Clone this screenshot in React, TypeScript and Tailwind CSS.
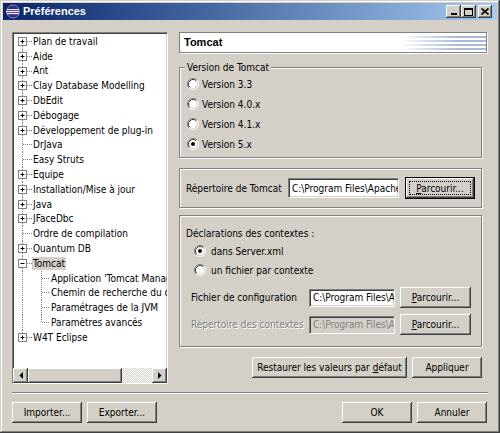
const UI = "font-['DejaVu_Sans_Condensed','Liberation_Sans',sans-serif] text-[10px] text-black";
const BOLD = "font-['Liberation_Sans',Arial,sans-serif] font-bold text-[11px]";

const raised =
  'bg-[#d4d0c8] shadow-[inset_-1px_-1px_0_#404040,inset_1px_1px_0_#fff,inset_-2px_-2px_0_#808080,inset_2px_2px_0_#d4d0c8]';
const raisedDefault =
  'bg-[#d4d0c8] shadow-[inset_0_0_0_1px_#000,inset_-2px_-2px_0_#404040,inset_2px_2px_0_#fff,inset_-3px_-3px_0_#808080,inset_3px_3px_0_#d4d0c8]';
const sunken =
  'border border-t-[#808080] border-l-[#808080] border-b-white border-r-white shadow-[inset_1px_1px_0_#404040,inset_-1px_-1px_0_#d4d0c8]';
const etched = 'border border-[#808080] shadow-[inset_1px_1px_0_#fff,1px_1px_0_#fff]';

type Node = { label: string; exp?: '+' | '-'; level?: number; last?: boolean; selected?: boolean };

const tree: Node[] = [
  { label: 'Plan de travail', exp: '+' },
  { label: 'Aide', exp: '+' },
  { label: 'Ant', exp: '+' },
  { label: 'Clay Database Modelling', exp: '+' },
  { label: 'DbEdit', exp: '+' },
  { label: 'Débogage', exp: '+' },
  { label: 'Développement de plug-in', exp: '+' },
  { label: 'DrJava' },
  { label: 'Easy Struts' },
  { label: 'Equipe', exp: '+' },
  { label: 'Installation/Mise à jour', exp: '+' },
  { label: 'Java', exp: '+' },
  { label: 'JFaceDbc', exp: '+' },
  { label: 'Ordre de compilation' },
  { label: 'Quantum DB', exp: '+' },
  { label: 'Tomcat', exp: '-', selected: true },
  { label: "Application 'Tomcat Manager'", level: 1 },
  { label: 'Chemin de recherche du contexte', level: 1 },
  { label: 'Paramétrages de la JVM', level: 1 },
  { label: 'Paramètres avancés', level: 1, last: true },
  { label: 'W4T Eclipse', exp: '+', last: true },
];

function TreeLines({ node, first }: { node: Node; first: boolean }) {
  const lvl = node.level ?? 0;
  const w = lvl === 1 ? 36 : 18;
  const dot = { stroke: '#808080', strokeWidth: 1, strokeDasharray: '1 1' };
  return (
    <svg width={w} height={15} viewBox={`0 0 ${w} 15`} className="shrink-0">
      {lvl === 0 && (
        <line x1={8.5} x2={8.5} y1={first ? 7.5 : 0} y2={node.last ? 7.5 : 15} {...dot} />
      )}
      {lvl === 0 && <line x1={node.exp ? 13 : 9} x2={18} y1={7.5} y2={7.5} {...dot} />}
      {lvl === 1 && (
        <>
          <line x1={8.5} x2={8.5} y1={0} y2={15} {...dot} />
          <line x1={27.5} x2={27.5} y1={0} y2={node.last ? 7.5 : 15} {...dot} />
          <line x1={28} x2={36} y1={7.5} y2={7.5} {...dot} />
        </>
      )}
      {node.exp && (
        <>
          <rect x={4.5} y={3.5} width={8} height={8} fill="#fff" stroke="#808080" />
          <line x1={6.5} x2={10.5} y1={7.5} y2={7.5} stroke="#000" />
          {node.exp === '+' && <line x1={8.5} x2={8.5} y1={5.5} y2={9.5} stroke="#000" />}
        </>
      )}
    </svg>
  );
}

function Radio({ checked }: { checked?: boolean }) {
  return (
    <svg width={12} height={12} viewBox="0 0 12 12" className="shrink-0">
      <circle cx={6} cy={6} r={5} fill="#fff" />
      <path d="M2.11 9.89A5.5 5.5 0 0 1 9.89 2.11" fill="none" stroke="#808080" />
      <path d="M9.89 2.11A5.5 5.5 0 0 1 2.11 9.89" fill="none" stroke="#fff" />
      <path d="M2.82 9.18A4.5 4.5 0 0 1 9.18 2.82" fill="none" stroke="#404040" />
      <path d="M9.18 2.82A4.5 4.5 0 0 1 2.82 9.18" fill="none" stroke="#d4d0c8" />
      {checked && <circle cx={6} cy={6} r={2} fill="#000" />}
    </svg>
  );
}

function Btn({ children, className = '', def }: { children: React.ReactNode; className?: string; def?: boolean }) {
  if (def) {
    return (
      <div className={`${raisedDefault} flex items-stretch ${className}`}>
        <div className="m-[4px] flex flex-1 items-center justify-center border border-dotted border-black">{children}</div>
      </div>
    );
  }
  return <div className={`${raised} flex items-center justify-center ${className}`}>{children}</div>;
}

function Parcourir() {
  return <span className="inline-block first-letter:underline">Parcourir...</span>;
}

function Field({ disabled, className = '' }: { disabled?: boolean; className?: string }) {
  return (
    <div
      className={`${sunken} ${disabled ? 'bg-[#d4d0c8] text-[#808080]' : 'bg-white'} flex items-center overflow-hidden whitespace-nowrap pl-[3px] ${className}`}
    >
      {'C:\\Program Files\\Apache Group\\Tomcat 5.0'}
    </div>
  );
}

function Arrow({ dir }: { dir: 'l' | 'r' }) {
  return (
    <div className={`${raised} flex h-full w-[15px] shrink-0 items-center justify-center`}>
      <svg width={4} height={7} viewBox="0 0 4 7">
        <path d={dir === 'l' ? 'M4 0V7L0.5 3.5Z' : 'M0 0V7L3.5 3.5Z'} fill="#000" />
      </svg>
    </div>
  );
}

export default function App() {
  return (
    <div
      className={`${UI} flex h-[433px] w-[500px] flex-col bg-[#d4d0c8] p-[3px] shadow-[inset_-1px_-1px_0_#404040,inset_1px_1px_0_#d4d0c8,inset_-2px_-2px_0_#808080,inset_2px_2px_0_#fff]`}
    >
      {/* Title bar */}
      <div className="flex h-[17px] shrink-0 items-center bg-linear-to-r from-[#0a246a] to-[#a6caf0] pl-[2px] pr-[5px]">
        <svg width={15} height={15} viewBox="0 0 15 15" className="shrink-0">
          <circle cx={8} cy={7.5} r={6.5} fill="#3b2a7a" />
          <circle cx={8} cy={7.5} r={6.5} fill="none" stroke="#9c8fd0" strokeWidth={0.8} />
          <rect x={2} y={5} width={12} height={1.2} fill="#e8e4ff" />
          <rect x={1} y={7} width={13} height={1.2} fill="#e8e4ff" />
          <rect x={2} y={9} width={12} height={1.2} fill="#e8e4ff" />
        </svg>
        <span className={`${BOLD} ml-[3px] text-white`}>Préférences</span>
        <div className="flex-1" />
        <div className={`${raised} flex h-[13px] w-[15px] items-end justify-center pb-[3px]`}>
          <div className="h-[2px] w-[6px] bg-black" />
        </div>
        <div className={`${raised} flex h-[13px] w-[15px] items-center justify-center`}>
          <div className="h-[8px] w-[9px] border border-t-2 border-black" />
        </div>
        <div className={`${raised} ml-[2px] flex h-[13px] w-[14px] items-center justify-center`}>
          <svg width={8} height={7} viewBox="0 0 8 7">
            <path d="M0.5 0.5L7.5 6.5M7.5 0.5L0.5 6.5" stroke="#000" strokeWidth={1.6} />
          </svg>
        </div>
      </div>

      {/* Body */}
      <div className="flex flex-1 flex-col px-[9px] pt-[12px]">
        <div className="flex h-[352px] gap-[11px]">
          {/* Tree */}
          <div className={`${sunken} flex w-[156px] flex-col bg-white`}>
            <div className="flex-1 overflow-hidden pl-[1px] pt-[1px]">
              {tree.map((n, i) => (
                <div key={i} className="flex h-[14.8px] items-center whitespace-nowrap">
                  <TreeLines node={n} first={i === 0} />
                  <span className={`px-[1px] leading-[13px] ${n.selected ? 'bg-[#d4d0c8]' : ''}`}>{n.label}</span>
                </div>
              ))}
            </div>
            <div className="flex h-[15px] shrink-0">
              <Arrow dir="l" />
              <div className={`${raised} h-full w-[94px] shrink-0`} />
              <div className="h-full flex-1 bg-[image:repeating-conic-gradient(#d4d0c8_0_25%,#fff_0_50%)] bg-size-[2px_2px]" />
              <Arrow dir="r" />
            </div>
          </div>

          {/* Right panel */}
          <div className="flex w-[308px] flex-col">
            <div className="flex h-[21px] shrink-0 items-center justify-between border border-[#808080] bg-white shadow-[1px_1px_0_#fff]">
              <span className={`${BOLD} pl-[4px]`}>Tomcat</span>
              {/* faded stripes */}
              <div className="flex h-full w-[96px] flex-col justify-center gap-[2px]">
                <div className="h-[2px] bg-linear-to-r from-white from-10% to-[#a9b9d9] to-70%" />
                <div className="h-[2px] bg-linear-to-r from-white from-10% to-[#a9b9d9] to-70%" />
                <div className="h-[2px] bg-linear-to-r from-white from-10% to-[#a9b9d9] to-70%" />
                <div className="h-[2px] bg-linear-to-r from-white from-10% to-[#a9b9d9] to-70%" />
              </div>
            </div>

            {/* Version */}
            <div className={`${etched} mt-[14px] flex h-[91px] w-[303px] flex-col`}>
              <span className="-mt-[7px] ml-[5px] w-fit bg-[#d4d0c8] px-[2px] leading-[13px]">Version de Tomcat</span>
              <div className="flex flex-col pl-[7px]">
                {['Version 3.3', 'Version 4.0.x', 'Version 4.1.x', 'Version 5.x'].map((v, i) => (
                  <div key={v} className="flex h-[20px] items-center gap-[3px]">
                    <Radio checked={i === 3} />
                    <span>{v}</span>
                  </div>
                ))}
              </div>
            </div>

            {/* Répertoire */}
            <div className={`${etched} mt-[10px] flex h-[40px] w-[303px] items-center pl-[6px]`}>
              <span className="w-[102px]">Répertoire de Tomcat</span>
              <Field className="h-[20px] w-[111px]" />
              <Btn def className="ml-[6px] h-[22px] w-[70px]">
                <Parcourir />
              </Btn>
            </div>

            {/* Contextes */}
            <div className={`${etched} mt-[7px] flex h-[132px] w-[303px] flex-col pt-[8px]`}>
              <div className="flex h-[18px] items-center pl-[6px]">Déclarations des contextes :</div>
              <div className="flex h-[18px] items-center gap-[5px] pl-[14px]">
                <Radio checked />
                <span>dans Server.xml</span>
              </div>
              <div className="flex h-[20px] items-center gap-[5px] pl-[14px]">
                <Radio />
                <span>un fichier par contexte</span>
              </div>
              <div className="mt-[7px] flex h-[21px] items-center pl-[11px]">
                <span className="w-[118px]">Fichier de configuration</span>
                <Field className="h-[18px] w-[86px]" />
                <Btn className="ml-[5px] h-[21px] w-[71px]">
                  <Parcourir />
                </Btn>
              </div>
              <div className="mt-[6px] flex h-[21px] items-center pl-[11px]">
                <span className="w-[118px] text-[#808080] [text-shadow:1px_1px_0_#fff]">Répertoire des contextes</span>
                <Field disabled className="h-[18px] w-[86px]" />
                <Btn className="ml-[5px] h-[21px] w-[71px]">
                  <Parcourir />
                </Btn>
              </div>
            </div>

            <div className="mt-[10px] flex w-[303px] justify-end gap-[5px]">
              <Btn className="h-[21px] w-[155px]">
                Restaurer les valeurs par&nbsp;<span className="underline">d</span>éfaut
              </Btn>
              <Btn className="h-[21px] w-[70px]">Appliquer</Btn>
            </div>
          </div>
        </div>

        {/* Separator */}
        <div className="mt-[8px] h-[2px] border-t border-b border-t-[#808080] border-b-white" />

        {/* Bottom buttons */}
        <div className="mt-[8px] flex pr-[1px]">
          <Btn className="h-[21px] w-[70px]">Importer...</Btn>
          <Btn className="ml-[5px] h-[21px] w-[70px]">Exporter...</Btn>
          <div className="flex-1" />
          <Btn className="h-[21px] w-[70px]">OK</Btn>
          <Btn className="ml-[5px] h-[21px] w-[70px]">Annuler</Btn>
        </div>
      </div>
    </div>
  );
}
